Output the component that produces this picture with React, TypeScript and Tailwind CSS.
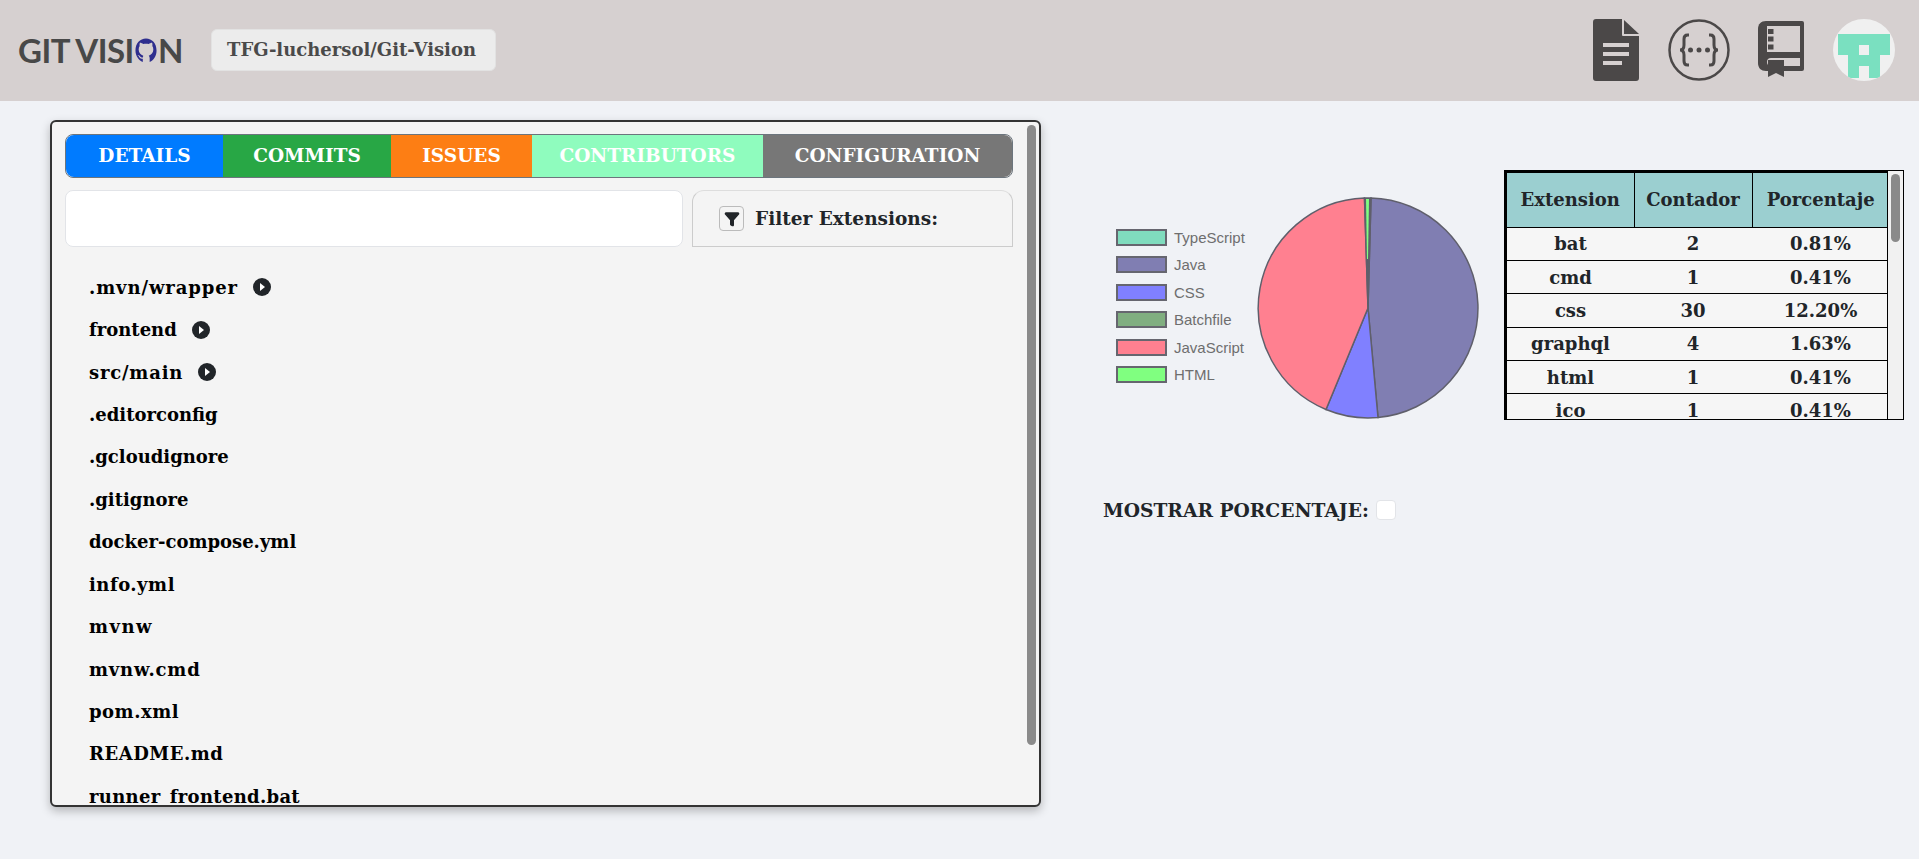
import { Filter } from "lucide-react";

const slab = "font-['DejaVu_Serif',serif] font-bold";

const tabs = [
  { label: "DETAILS", className: "w-[157px] bg-[#007bff] rounded-l-lg" },
  { label: "COMMITS", className: "w-[168px] bg-[#28a745]" },
  { label: "ISSUES", className: "w-[141px] bg-[#fd7e14]" },
  { label: "CONTRIBUTORS", className: "w-[231px] bg-[#8ffcbe]" },
  { label: "CONFIGURATION", className: "flex-1 bg-[#777777] rounded-r-lg" },
];

const files = [
  { name: ".mvn/wrapper", folder: true, track: "tracking-[0.9px]" },
  { name: "frontend", folder: true },
  { name: "src/main", folder: true, track: "tracking-[0.8px]" },
  { name: ".editorconfig" },
  { name: ".gcloudignore" },
  { name: ".gitignore" },
  { name: "docker-compose.yml" },
  { name: "info.yml", track: "tracking-[0.5px]" },
  { name: "mvnw", track: "tracking-[1.500px]" },
  { name: "mvnw.cmd", track: "tracking-[0.8px]" },
  { name: "pom.xml", track: "tracking-[0.5px]" },
  { name: "README.md", track: "tracking-[0.5px]" },
  { name: "runner_frontend.bat", track: "tracking-[0.3px]" },
];

const legend = [
  { label: "TypeScript", color: "bg-[#80dcbe]" },
  { label: "Java", color: "bg-[#807eb2]" },
  { label: "CSS", color: "bg-[#8080ff]" },
  { label: "Batchfile", color: "bg-[#80ae80]" },
  { label: "JavaScript", color: "bg-[#ff8090]" },
  { label: "HTML", color: "bg-[#80ff80]" },
];

const rows = [
  ["bat", "2", "0.81%"],
  ["cmd", "1", "0.41%"],
  ["css", "30", "12.20%"],
  ["graphql", "4", "1.63%"],
  ["html", "1", "0.41%"],
  ["ico", "1", "0.41%"],
];

function LogoCat() {
  return (
    <svg viewBox="0 0 24 26" className="w-[22px] h-[25px] mx-[1px]" fill="#2e2e8e">
      <path d="M12 0C5.4 0 .5 5.4.5 13c0 5.800 3.400 10.700 8 12.600v-3.600c-2.600.5-3.500-.9-4.200-2.400-.4-.8-1-1.200-1.600-1.600 1.400-.4 2.300.6 3 1.600.6.9 1.600 1.300 2.900.9l.4-1.700C6.300 17.800 4 15.800 4 12c0-1.500.4-2.800 1.100-3.800-.2-1-.2-2.600.3-3.700 1.300 0 2.700.7 3.600 1.500.9-.3 2-.4 3-.4s2.100.1 3 .4c.9-.8 2.300-1.500 3.600-1.500.5 1.100.5 2.700.3 3.700.7 1 1.100 2.300 1.100 3.800 0 3.800-2.300 5.800-5 6.800.6.500 1 1.300 1 2.400v4.400c4.600-1.900 7.500-6.800 7.500-12.600C23.500 5.400 18.600 0 12 0z" />
    </svg>
  );
}

function DocIcon() {
  return (
    <svg viewBox="0 0 46 62" className="w-[46px] h-[62px]">
      <path d="M3 0h26v16a1 1 0 0 0 1 1h16v42a3 3 0 0 1-3 3H3a3 3 0 0 1-3-3V3a3 3 0 0 1 3-3z" fill="#4b4848" />
      <path d="M31 1l15 14H31z" fill="#4b4848" />
      <rect x="10" y="24" width="26" height="4" fill="#d6d0d0" />
      <rect x="10" y="33" width="26" height="4" fill="#d6d0d0" />
      <rect x="10" y="42" width="19" height="4" fill="#d6d0d0" />
    </svg>
  );
}

function ApiIcon() {
  return (
    <svg viewBox="0 0 62 62" className="w-[62px] h-[62px]" fill="none" stroke="#4b4848">
      <circle cx="31" cy="31" r="29.500" strokeWidth="2.500" />
      <path d="M21 16h-1.500c-2.500 0-3.500 1.500-3.500 4v6c0 3-1 5-4 5 3 0 4 2 4 5v6c0 2.500 1 4 3.500 4H21M41 16h1.500c2.500 0 3.500 1.500 3.500 4v6c0 3 1 5 4 5-3 0-4 2-4 5v6c0 2.500-1 4-3.500 4H41" strokeWidth="3" />
      <circle cx="22.500" cy="31" r="2.500" fill="#4b4848" stroke="none" />
      <circle cx="31" cy="31" r="2.500" fill="#4b4848" stroke="none" />
      <circle cx="39.500" cy="31" r="2.500" fill="#4b4848" stroke="none" />
    </svg>
  );
}

function BookIcon() {
  return (
    <svg viewBox="0 0 47 57" className="w-[47px] h-[57px]">
      <path d="M8 0h36a2 2 0 0 1 2 2v46a2 2 0 0 1-2 2H8c-5 0-8-3-8-8V8c0-5 3-8 8-8z" fill="#4b4848" />
      <path d="M9 5h33v26H9z" fill="#d6d0d0" />
      <path d="M10 8h5.500v5H10zM10 15.500h5.500v5H10zM10 23.500h5.500v5H10z" fill="#4b4848" />
      <path d="M13 37h29v8H13a4 4 0 0 1 0-8z" fill="#d6d0d0" />
      <path d="M10 39h16v17l-8-4-8 4z" fill="#4b4848" />
    </svg>
  );
}

function Avatar() {
  return (
    <div className="w-[62px] h-[62px] rounded-full bg-[#f0f0f0] flex justify-center overflow-hidden pt-[15px]">
      <svg viewBox="0 0 52 44" className="w-[52px] h-[44px]">
        <path d="M0 0h52v21H42v23H31V32H21v12H10V21H0z" fill="#7ae0c0" />
        <rect x="21" y="11" width="10" height="10" fill="#f0f0f0" />
      </svg>
    </div>
  );
}

function Pie() {
  // slices measured from the reference
  return (
    <svg viewBox="0 0 222 222" className="w-[222px] h-[222px]" stroke="#5f5f6b" strokeWidth="1.500">
      <path d="M111 111L114 1A110 110 0 0 1 121 220.500Z" fill="#807eb2" />
      <path d="M111 111L121 220.500A110 110 0 0 1 69 212.500Z" fill="#8080ff" />
      <path d="M111 111L69 212.500A110 110 0 0 1 107.500 1Z" fill="#ff8090" />
      <path d="M111 111L107.500 1A110 110 0 0 1 114 1Z" fill="#5f5f6b" />
      <path d="M110 62L109 2h3L111 62Z" fill="#80ff80" stroke="none" />
    </svg>
  );
}

export default function App() {
  return (
    <div className="w-[1919px] h-[859px] overflow-hidden bg-[#f0f2f6] text-[#212529]">
      <header className="h-[101px] bg-[#d6d0d0] flex items-center justify-between pl-[18px] pr-[24px]">
        <div className="flex items-center">
          <div className="flex items-center w-[193px] font-['Lato',sans-serif] font-bold text-[33px] leading-none text-[#484848] tracking-[-0.5px]">
            <span>GIT VISI</span>
            <LogoCat />
            <span>N</span>
          </div>
          <div className={`${slab} h-[42px] w-[285px] -mt-[2px] px-[15px] flex items-center bg-[#ececec] border border-[#e2e2e2] rounded-md text-[18px] text-[#4a4a4a]`}>
            TFG-luchersol/Git-Vision
          </div>
        </div>
        <div className="flex items-center -mt-[2px]">
          <DocIcon />
          <div className="ml-[29px]"><ApiIcon /></div>
          <div className="ml-[28px]"><BookIcon /></div>
          <div className="ml-[28px]"><Avatar /></div>
        </div>
      </header>

      <main className="flex items-start pl-[50px] pt-[19px]">
        <section className="relative w-[991px] h-[687px] border-2 border-[#333333] rounded-md bg-[#f4f4f4] shadow-[0_4px_10px_rgba(0,0,0,0.25)] overflow-hidden pl-[13px] pr-[26px] pt-[12px]">
          <nav className={`${slab} flex h-[44px] border border-[#6c757d] rounded-lg text-[18.500px] text-white`}>
            {tabs.map((t) => (
              <div key={t.label} className={`flex items-center justify-center ${t.className}`}>
                {t.label}
              </div>
            ))}
          </nav>

          <div className="flex gap-[9px] mt-[12px] h-[57px]">
            <div className="flex-1 bg-white border border-[#e2e4e8] rounded-lg" />
            <div className="w-[321px] flex items-center pl-[26px] border border-[#cccccc] border-t-[#dddddd] rounded-t-xl">
              <span className="w-[25px] h-[25px] flex items-center justify-center border border-[#bbbbbb] rounded-sm">
                <Filter className="w-4 h-4 text-[#212529]" fill="#212529" />
              </span>
              <span className={`${slab} ml-[11px] text-[18.500px]`}>Filter Extensions:</span>
            </div>
          </div>

          <ul className={`${slab} mt-[19px] pl-[24px] text-[18px] text-black`}>
            {files.map((f) => (
              <li key={f.name} className="h-[42.430px] flex items-center">
                <span className={f.track}>{f.name}</span>
                {f.folder && (
                  <span className="ml-[15px] w-[18px] h-[18px] rounded-full bg-[#212529] flex items-center justify-center">
                    <span className="ml-[1px] w-0 h-0 border-y-[4px] border-y-transparent border-l-[5px] border-l-white" />
                  </span>
                )}
              </li>
            ))}
          </ul>

          {/* scrollbar */}
          <div className="absolute top-[3px] right-[3px] w-[9px] h-[620px] rounded-full bg-[#8a8a8a]" />
        </section>

        <div className="ml-[62px] flex flex-col">
          <div className="flex items-start">
            <div className="flex items-start w-[401px] h-[249px]">
              <ul className="mt-[109px] ml-[13px] flex flex-col gap-[10.400px] font-['Liberation_Sans',sans-serif] text-[15px] leading-[15px] text-[#6e6e6e]">
                {legend.map((l) => (
                  <li key={l.label} className="flex items-center">
                    <span className={`w-[51px] h-[17px] border-2 border-[#66666f] ${l.color}`} />
                    <span className="ml-[7px]">{l.label}</span>
                  </li>
                ))}
              </ul>
              <div className="ml-[12px] mt-[77px]"><Pie /></div>
            </div>

            <div className={`${slab} relative mt-[50px] w-[400px] h-[250px] border border-black overflow-hidden`}>
              <table className="w-[384px] table-fixed border-collapse text-[18px] text-center">
                <thead className="bg-[#9bcfd0]">
                  <tr className="h-[55px]">
                    <th className="w-[128px] border-2 border-black border-b border-r">Extension</th>
                    <th className="w-[118px] border-t-2 border-black border-r">Contador</th>
                    <th className="border-t-2 border-black">Porcentaje</th>
                  </tr>
                </thead>
                <tbody className="bg-[#f6f6f6]">
                  {rows.map((r) => (
                    <tr key={r[0]} className="h-[33.400px] border-t border-black">
                      <td className="border-l-2 border-black">{r[0]}</td>
                      <td>{r[1]}</td>
                      <td>{r[2]}</td>
                    </tr>
                  ))}
                </tbody>
              </table>
              <div className="absolute top-0 right-0 bottom-0 w-[16px] border-l border-black bg-[#f1f1f1]">
                <div className="mt-[3px] ml-[3px] w-[9px] h-[68px] rounded-full bg-[#8a8a8a]" />
              </div>
            </div>
          </div>

          <div className={`${slab} mt-[76px] ml-0 flex items-center text-[18.700px]`}>
            MOSTRAR PORCENTAJE:
            <span className="ml-[7px] w-[20px] h-[20px] bg-white border border-[#e2e4e8] rounded" />
          </div>
        </div>
      </main>
    </div>
  );
}
